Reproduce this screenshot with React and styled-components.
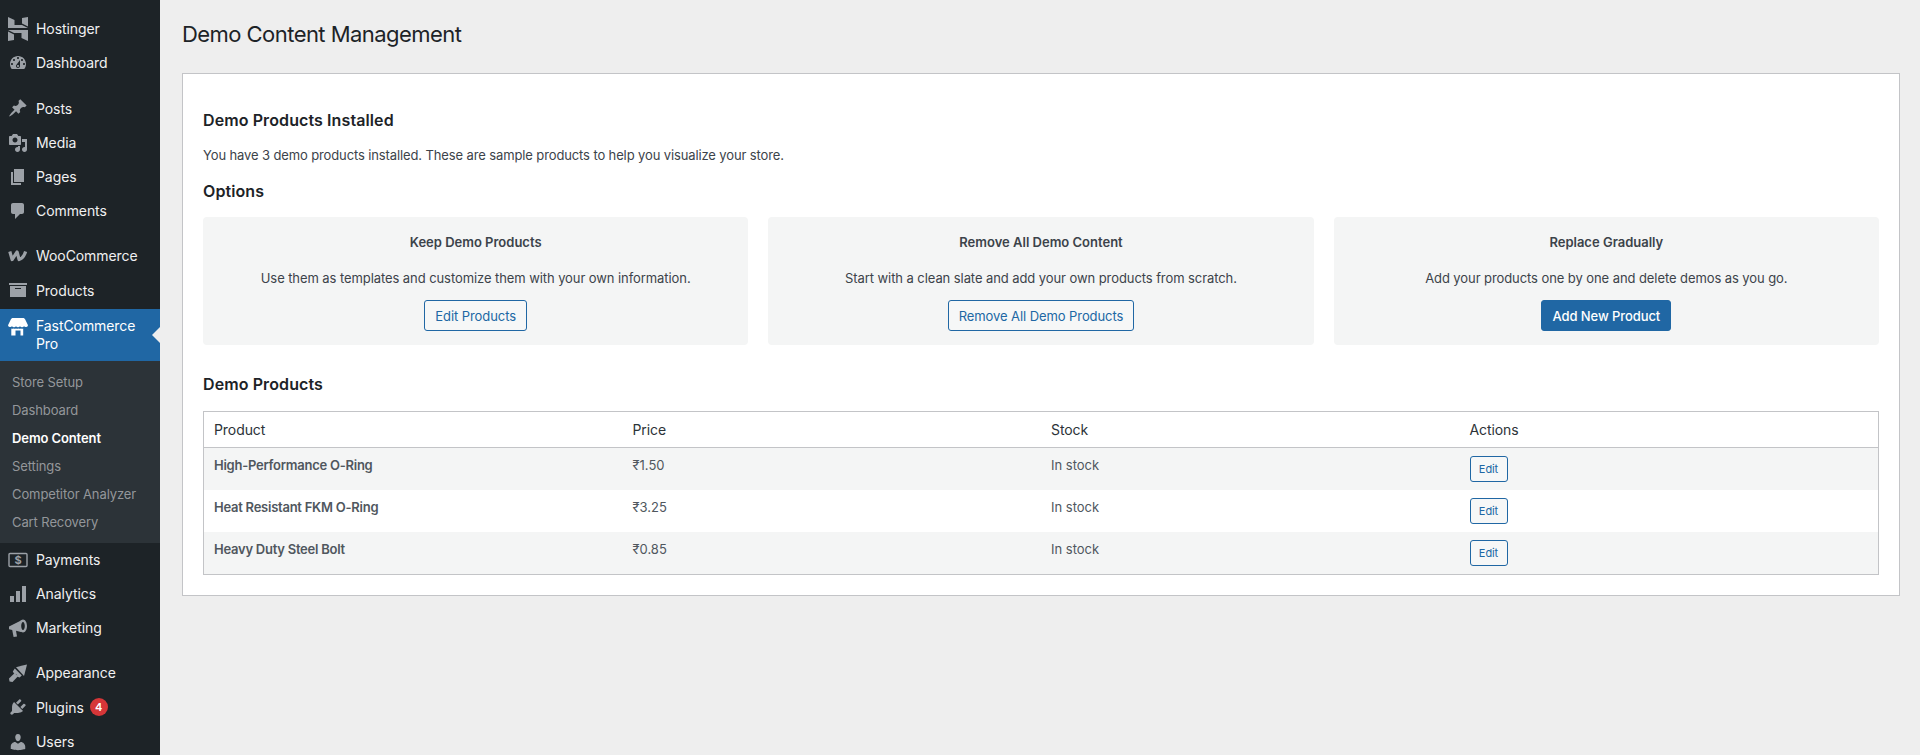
import React from "react";
import styled, { createGlobalStyle } from "styled-components";

const GlobalStyle = createGlobalStyle`
    html, body {
        margin: 0;
        padding: 0;
        background: #eeeeee;
    }
    body {
        font-family: Inter, "Noto Sans", "Liberation Sans", sans-serif;
        font-size: 13px;
        line-height: 1.4;
        color: #3c434a;
    }
    * {
        box-sizing: border-box;
    }
`;

const Icon = ({ children, width = 20, height = 20 }) => (
    <svg
        width={width}
        height={height}
        viewBox={`0 0 ${width} ${height}`}
        fill="currentColor"
        fillRule="evenodd"
        aria-hidden="true"
    >
        {children}
    </svg>
);

const icons = {
    hostinger: (
        <Icon width={20} height={24}>
            <path d="M0 0l6.500 3v5H14l6 3H0z" />
            <path d="M14 6.500V1l6-1v9.500z" />
            <path d="M20 24l-6.500-3v-5H6l-6-3h20z" />
            <path d="M6 17.500V23l-6 1v-9.500z" />
        </Icon>
    ),
    dashboard: (
        <Icon>
            <path d="M3.760 16h12.480c1.100-1.370 1.760-3.110 1.760-5 0-4.420-3.580-8-8-8s-8 3.580-8 8c0 1.890.66 3.630 1.760 5zM10 4c.55 0 1 .45 1 1s-.45 1-1 1-1-.45-1-1 .45-1 1-1zM6 6c.55 0 1 .45 1 1s-.45 1-1 1-1-.45-1-1 .45-1 1-1zm8 0c.55 0 1 .45 1 1s-.45 1-1 1-1-.45-1-1 .45-1 1-1zm-5.370 5.550L12 7v6c0 1.100-.9 2-2 2s-2-.9-2-2c0-.57.24-1.080.63-1.450zM4 10c.55 0 1 .45 1 1s-.45 1-1 1-1-.45-1-1 .45-1 1-1zm12 0c.55 0 1 .45 1 1s-.45 1-1 1-1-.45-1-1 .45-1 1-1zm-5 3c0-.55-.45-1-1-1s-1 .45-1 1 .45 1 1 1 1-.45 1-1z" />
        </Icon>
    ),
    posts: (
        <Icon>
            <path d="M10.440 3.020l1.820-1.820 6.360 6.350-1.830 1.820c-1.050-.68-2.480-.57-3.410.36l-.75.75c-.92.93-1.040 2.350-.35 3.410l-1.830 1.820-2.410-2.410-2.800 2.790c-.42.42-3.380 2.710-3.800 2.290s1.860-3.390 2.280-3.810l2.790-2.790L4.100 9.360l1.830-1.820c1.050.69 2.480.57 3.400-.36l.75-.75c.93-.92 1.050-2.350.36-3.410z" />
        </Icon>
    ),
    media: (
        <Icon>
            <path d="M13 11V4c0-.55-.45-1-1-1h-1.670L9 1H5L3.670 3H2c-.55 0-1 .45-1 1v7c0 .55.45 1 1 1h10c.55 0 1-.45 1-1zM7 4.500c1.380 0 2.500 1.120 2.500 2.500S8.380 9.500 7 9.500 4.500 8.380 4.500 7 5.620 4.500 7 4.500z" />
            <path d="M14 6h5v10.500c0 1.380-1.120 2.500-2.500 2.500S14 17.880 14 16.500s1.120-2.500 2.500-2.500c.17 0 .34.020.5.050V9h-3V6z" />
            <path d="M10 14.050V13h2v3.500c0 1.380-1.120 2.500-2.500 2.500S7 17.880 7 16.500 8.120 14 9.500 14c.17 0 .34.020.5.050z" />
        </Icon>
    ),
    pages: (
        <Icon>
            <path d="M6 15V2h10v13H6zm-1 1h8v2H3V5h2v11z" />
        </Icon>
    ),
    comments: (
        <Icon>
            <path d="M5 2h9c1.100 0 2 .9 2 2v7c0 1.100-.9 2-2 2h-2l-5 5v-5H5c-1.100 0-2-.9-2-2V4c0-1.100.9-2 2-2z" />
        </Icon>
    ),
    woo: (
        <svg width="20" height="20" viewBox="0 0 20 20" fill="none" aria-hidden="true">
            <path
                d="M1.800 5.500l2.300 8 5-7.500 2 7.500c3.200-1 5.300-4 6.500-8"
                stroke="currentColor"
                strokeWidth="3.200"
                strokeLinejoin="round"
            />
        </svg>
    ),
    products: (
        <Icon>
            <path d="M19 3v2H1V3h18zM2 6h16v11H2V6zm11 3V8H7v1h6z" />
        </Icon>
    ),
    store: (
        <Icon>
            <path d="M5 1h10c1 0 1.700.5 2.200 1.500L20 8.200a2.300 2.300 0 0 1-4 1.100 2.500 2.500 0 0 1-4 0 2.500 2.500 0 0 1-4 0 2.500 2.500 0 0 1-4 0 2.300 2.300 0 0 1-4-1.100l2.800-5.700C3.300 1.500 4 1 5 1z" />
            <path d="M3.300 11.500c.8.300 1.500.200 2.200-.1.900.4 1.700.4 2.500 0 .8.4 1.700.4 2.500 0 .8.400 1.600.400 2.500 0 .7.300 1.500.400 2.200.1v7H12.500V13.500h-5v5H3.300z" />
        </Icon>
    ),
    payments: (
        <svg width="20" height="20" viewBox="0 0 20 20" fill="none" aria-hidden="true">
            <rect x="1" y="3.500" width="18" height="13" rx="1" stroke="currentColor" strokeWidth="1.400" />
            <text
                x="10"
                y="14"
                textAnchor="middle"
                fontFamily="Inter, sans-serif"
                fontSize="11"
                fontWeight="700"
                fill="currentColor"
            >
                $
            </text>
        </svg>
    ),
    analytics: (
        <Icon>
            <path d="M18 18V2h-4v16h4zm-6 0V7H8v11h4zm-6 0v-6H2v6h4z" />
        </Icon>
    ),
    marketing: (
        <Icon>
            <path d="M1 8.500L13 2.500v11.500l-5-1.200 1 5.700-3.400.5L4.200 12 1 11.300z" />
            <path d="M15 1.500c2.200 0 4 2.900 4 6.500s-1.800 6.500-4 6.500-4-2.900-4-6.500 1.800-6.500 4-6.500zm0 2.500c-1 0-1.800 1.800-1.800 4s.8 4 1.800 4 1.800-1.800 1.800-4-.8-4-1.800-4z" />
        </Icon>
    ),
    appearance: (
        <Icon>
            <path d="M8 4.200L14.500 2.500l4.500-1-1.200 4.800-1.800 6.700z" />
            <path d="M6.800 5.400l7 7-2.200 2.100-2.100-.7-.9-2.300-2.600-1-1.200-2.100z" />
            <path d="M6.700 9.900L1 15.600 1.500 18.500l3 .5 5.500-5.700z" />
        </Icon>
    ),
    plugins: (
        <Icon>
            <path d="M13.110 4.360L9.870 7.600 8 5.730l3.240-3.240c.35-.34 1.050-.2 1.560.32.520.51.660 1.210.31 1.550zm-8 1.770l.91-1.120 9.010 9.010-1.190.84c-.71.71-2.630 1.160-3.820 1.160H6.140L4.900 17.260c-.59.59-1.540.59-2.120 0-.59-.58-.59-1.530 0-2.120l1.240-1.240v-3.880c0-1.130.4-3.150 1.090-3.890zm7.260 3.970l3.240-3.240c.34-.35 1.040-.21 1.550.31.520.51.660 1.210.31 1.550l-3.240 3.250z" />
        </Icon>
    ),
    users: (
        <Icon>
            <path d="M10 9.250c-2.270 0-2.730-3.440-2.730-3.440C7 4.020 7.820 2 9.970 2c2.160 0 2.980 2.020 2.710 3.810 0 0-.41 3.440-2.680 3.440zm0 2.570L12.720 10c2.390 0 4.520 2.330 4.520 4.530v2.490s-3.650 1.130-7.240 1.130c-3.650 0-7.240-1.130-7.240-1.130v-2.490c0-2.250 1.940-4.480 4.470-4.480z" />
        </Icon>
    ),
};

const upperGroups = [
    [
        { key: "hostinger", label: "Hostinger" },
        { key: "dashboard", label: "Dashboard" },
    ],
    [
        { key: "posts", label: "Posts" },
        { key: "media", label: "Media" },
        { key: "pages", label: "Pages" },
        { key: "comments", label: "Comments" },
    ],
    [
        { key: "woo", label: "WooCommerce" },
        { key: "products", label: "Products" },
    ],
];

const lowerGroups = [
    [
        { key: "payments", label: "Payments" },
        { key: "analytics", label: "Analytics" },
        { key: "marketing", label: "Marketing" },
    ],
    [
        { key: "appearance", label: "Appearance" },
        { key: "plugins", label: "Plugins", badge: 4 },
        { key: "users", label: "Users" },
    ],
];

const subItems = [
    "Store Setup",
    "Dashboard",
    "Demo Content",
    "Settings",
    "Competitor Analyzer",
    "Cart Recovery",
];

const options = [
    {
        title: "Keep Demo Products",
        text: "Use them as templates and customize them with your own information.",
        button: "Edit Products",
    },
    {
        title: "Remove All Demo Content",
        text: "Start with a clean slate and add your own products from scratch.",
        button: "Remove All Demo Products",
    },
    {
        title: "Replace Gradually",
        text: "Add your products one by one and delete demos as you go.",
        button: "Add New Product",
        primary: true,
    },
];

const products = [
    { name: "High-Performance O-Ring", price: "₹1.50", stock: "In stock" },
    { name: "Heat Resistant FKM O-Ring", price: "₹3.25", stock: "In stock" },
    { name: "Heavy Duty Steel Bolt", price: "₹0.85", stock: "In stock" },
];

const MenuGroup = ({ items }) => (
    <Group>
        {items.map((item) => (
            <MenuItem key={item.key}>
                <IconSlot>{icons[item.key]}</IconSlot>
                <span>{item.label}</span>
                {item.badge && <Badge>{item.badge}</Badge>}
            </MenuItem>
        ))}
    </Group>
);

const App = () => {
    return (
        <Page>
            <GlobalStyle />
            <Sidebar>
                {upperGroups.map((items) => (
                    <MenuGroup key={items[0].key} items={items} />
                ))}
                <ActiveItem>
                    <IconSlot>{icons.store}</IconSlot>
                    <span>FastCommerce Pro</span>
                </ActiveItem>
                <SubMenu>
                    {subItems.map((label) => (
                        <SubItem key={label} $current={label === "Demo Content"}>
                            {label}
                        </SubItem>
                    ))}
                </SubMenu>
                {lowerGroups.map((items) => (
                    <MenuGroup key={items[0].key} items={items} />
                ))}
            </Sidebar>
            <Main>
                <Title>Demo Content Management</Title>
                <Panel>
                    <SectionTitle>Demo Products Installed</SectionTitle>
                    <Intro>
                        You have 3 demo products installed. These are sample
                        products to help you visualize your store.
                    </Intro>
                    <SectionTitle>Options</SectionTitle>
                    <Cards>
                        {options.map((option) => (
                            <Card key={option.title}>
                                <CardTitle>{option.title}</CardTitle>
                                <CardText>{option.text}</CardText>
                                <Button $primary={option.primary}>
                                    {option.button}
                                </Button>
                            </Card>
                        ))}
                    </Cards>
                    <TableTitle>Demo Products</TableTitle>
                    <Table>
                        <thead>
                            <tr>
                                <th>Product</th>
                                <th>Price</th>
                                <th>Stock</th>
                                <th>Actions</th>
                            </tr>
                        </thead>
                        <tbody>
                            {products.map((product) => (
                                <tr key={product.name}>
                                    <td>
                                        <strong>{product.name}</strong>
                                    </td>
                                    <td>{product.price}</td>
                                    <td>{product.stock}</td>
                                    <td>
                                        <SmallButton>Edit</SmallButton>
                                    </td>
                                </tr>
                            ))}
                        </tbody>
                    </Table>
                </Panel>
            </Main>
        </Page>
    );
};

const Page = styled.div`
    display: flex;
    height: 755px;
    overflow: hidden;
`;

const Sidebar = styled.nav`
    flex: 0 0 160px;
    background: #1d2327;
    padding-top: 12px;
`;

const Group = styled.div`
    margin-bottom: 11px;
    &:nth-of-type(3) {
        margin-bottom: 1px;
    }
`;

const MenuItem = styled.div`
    display: flex;
    align-items: center;
    height: 34.2px;
    color: #f0f0f1;
    font-size: 14px;
    letter-spacing: -0.08px;
    svg {
        color: #9ca1a7;
    }
`;

const IconSlot = styled.div`
    flex: 0 0 36px;
    display: flex;
    justify-content: center;
    align-items: center;
`;

const Badge = styled.span`
    display: inline-flex;
    align-items: center;
    justify-content: center;
    width: 18px;
    height: 18px;
    margin-left: 6px;
    border-radius: 50%;
    background: #d63638;
    color: #fff;
    font-size: 11px;
    font-weight: 600;
`;

const ActiveItem = styled.div`
    position: relative;
    display: flex;
    align-items: flex-start;
    height: 52px;
    padding-top: 8px;
    background: #2067a4;
    color: #fff;
    font-size: 14px;
    line-height: 18px;
    letter-spacing: -0.08px;
    span {
        flex: 1;
    }
    &::after {
        content: "";
        position: absolute;
        right: 0;
        top: 18px;
        border: 8px solid transparent;
        border-right-color: #eeeeee;
    }
`;

const SubMenu = styled.div`
    background: #2c3338;
    padding: 7px 0 6px;
`;

const SubItem = styled.div`
    height: 28.2px;
    padding-left: 12px;
    display: flex;
    align-items: center;
    font-size: 13px;
    letter-spacing: -0.1px;
    color: ${(props) => (props.$current ? "#ffffff" : "#c3c4c7b3")};
    font-weight: ${(props) => (props.$current ? 600 : 400)};
`;

const Main = styled.main`
    flex: 1;
    min-width: 0;
    padding: 0 20px 0 22px;
`;

const Title = styled.h1`
    margin: 0;
    padding: 17px 0 0;
    height: 73px;
    font-size: 22px;
    line-height: 34px;
    font-weight: 400;
    letter-spacing: -0.55px;
    color: #1d2327;
`;

const Panel = styled.section`
    background: #fff;
    border: 1px solid #c3c4c7;
    padding: 20px;
    height: 523px;
`;

const SectionTitle = styled.h2`
    margin: 0;
    padding-top: 16px;
    font-size: 16px;
    line-height: 21px;
    font-weight: 600;
    letter-spacing: 0.1px;
    color: #1d2327;
`;

const Intro = styled.p`
    margin: 15px 0 0;
    font-size: 13px;
    line-height: 18px;
    letter-spacing: -0.12px;
    color: #3c434a;
    & + h2 {
        padding-top: 17px;
    }
`;

const Cards = styled.div`
    display: grid;
    grid-template-columns: repeat(3, 1fr);
    gap: 20px;
    margin-top: 15px;
`;

const Card = styled.div`
    display: flex;
    flex-direction: column;
    align-items: center;
    height: 128px;
    padding-top: 16px;
    background: #f4f5f5;
    border-radius: 4px;
`;

const CardTitle = styled.h3`
    margin: 0;
    font-size: 13px;
    line-height: 18px;
    font-weight: 600;
    color: #3c434a;
`;

const CardText = styled.p`
    margin: 18px 0 0;
    font-size: 13px;
    line-height: 18px;
    letter-spacing: -0.08px;
    color: #3c434a;
`;

const Button = styled.button`
    margin-top: 13px;
    height: 31px;
    padding: 0 10px;
    border: 1px solid #2067a4;
    border-radius: 3px;
    background: ${(props) => (props.$primary ? "#2067a4" : "#f6f7f7")};
    color: ${(props) => (props.$primary ? "#fff" : "#2067a4")};
    font-family: inherit;
    font-size: 13px;
    letter-spacing: -0.08px;
    font-weight: ${(props) => (props.$primary ? 500 : 400)};
`;

const SmallButton = styled(Button)`
    margin: 0;
    display: block;
    width: 38px;
    height: 26px;
    padding: 0;
    font-size: 11px;
`;

const TableTitle = styled.h2`
    margin: 29px 0 0;
    font-size: 16px;
    line-height: 21px;
    font-weight: 600;
    letter-spacing: 0.1px;
    color: #1d2327;
`;

const Table = styled.table`
    width: 100%;
    margin-top: 16px;
    table-layout: fixed;
    border-collapse: separate;
    border-spacing: 0;
    border: 1px solid #c3c4c7;

    th {
        height: 36px;
        padding: 0 10px;
        text-align: left;
        font-size: 14px;
        font-weight: 400;
        letter-spacing: -0.08px;
        color: #2c3338;
        border-bottom: 1px solid #c3c4c7;
    }
    td {
        height: 42px;
        padding: 8px 10px 0;
        vertical-align: top;
        font-size: 13px;
        line-height: 18px;
        color: #50575e;
    }
    strong {
        font-weight: 600;
        letter-spacing: -0.25px;
    }
    tbody tr:nth-child(odd) td {
        background: #f4f5f5;
    }
`;

export default App;
